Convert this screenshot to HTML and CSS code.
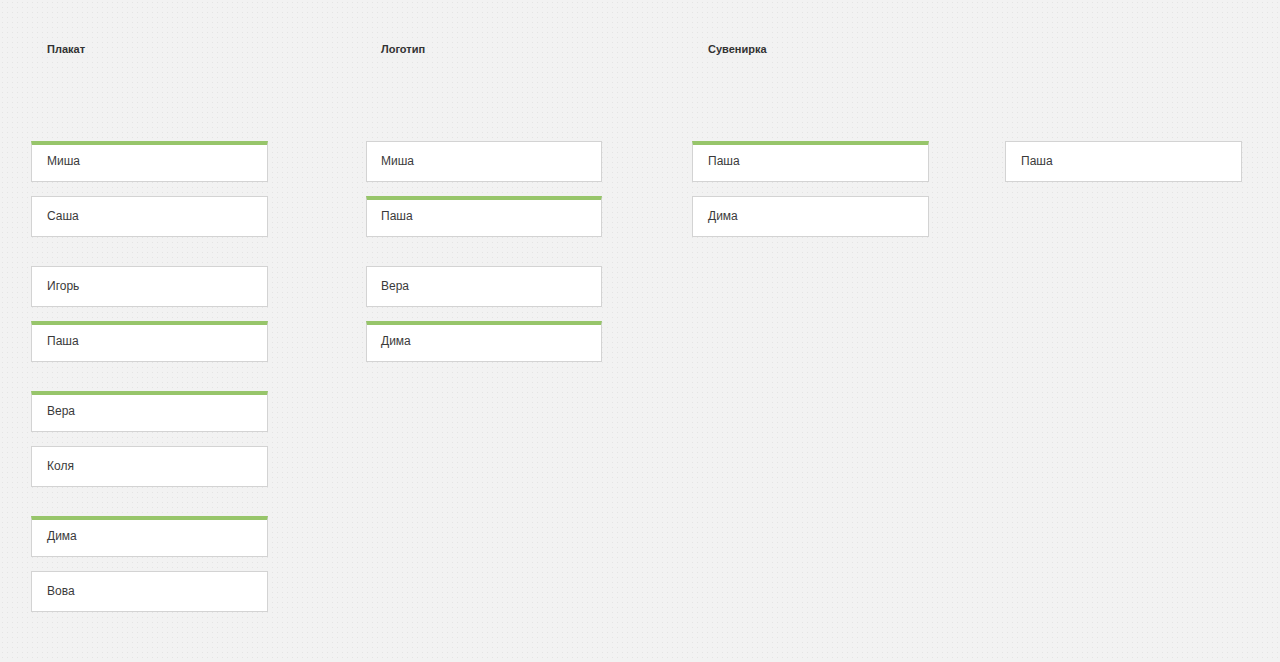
FILE: index.html
```html
<!DOCTYPE html>
<html lang="ru">

<head>
  <meta charset="UTF-8">
  <meta name="viewport" content="width=device-width, initial-scale=1">
  <title>Голосование</title>
  <link rel="stylesheet" href="styles.css">
</head>

<body>
  <div class="board">
    <div class="column">
      <h2 class="column-title">Плакат</h2>
      <div class="group">
        <div class="card card-voted">Миша</div>
        <div class="card">Саша</div>
      </div>
      <div class="group">
        <div class="card">Игорь</div>
        <div class="card card-voted">Паша</div>
      </div>
      <div class="group">
        <div class="card card-voted">Вера</div>
        <div class="card">Коля</div>
      </div>
      <div class="group">
        <div class="card card-voted">Дима</div>
        <div class="card">Вова</div>
      </div>
    </div>

    <div class="column column-narrow">
      <h2 class="column-title">Логотип</h2>
      <div class="group">
        <div class="card">Миша</div>
        <div class="card card-voted">Паша</div>
      </div>
      <div class="group">
        <div class="card">Вера</div>
        <div class="card card-voted">Дима</div>
      </div>
    </div>

    <div class="column">
      <h2 class="column-title">Сувенирка</h2>
      <div class="group">
        <div class="card card-voted">Паша</div>
        <div class="card">Дима</div>
      </div>
    </div>

    <div class="column">
      <h2 class="column-title"></h2>
      <div class="group">
        <div class="card">Паша</div>
      </div>
    </div>
  </div>
</body>

</html>
```

FILE: styles.css
```css
body {
  margin: 0;
  font-family: 'Liberation Sans', Arial, Helvetica, sans-serif;
  color: #3a3a3a;
  background-color: #f2f2f2;
  background-image: radial-gradient(circle, #e4e4e4 0.8px, transparent 1px);
  background-size: 5px 5px;
  min-height: 662px;
}

.board {
  display: grid;
  grid-template-columns: 335px 326px 313px 237px;
  padding: 0 0 0 31px;
}

.column-title {
  margin: 0;
  height: 141px;
  box-sizing: border-box;
  padding: 43px 0 0 16px;
  font-size: 11px;
  line-height: 13px;
  font-weight: bold;
  color: #333;
}

.column-narrow .column-title {
  padding-left: 15px;
}

.group {
  display: flex;
  flex-direction: column;
  gap: 14px;
  margin-bottom: 29px;
  width: 237px;
}

.column-narrow .group {
  width: 236px;
}

.card {
  box-sizing: border-box;
  height: 41px;
  padding: 0 15px 2px;
  display: flex;
  align-items: center;
  background: white;
  border: 1px solid #d3d3d3;
  font-size: 12px;
}

.column-narrow .card {
  padding-left: 14px;
}

.card-voted {
  border-top: 4px solid #97c56a;
  padding-bottom: 5px;
}
```
